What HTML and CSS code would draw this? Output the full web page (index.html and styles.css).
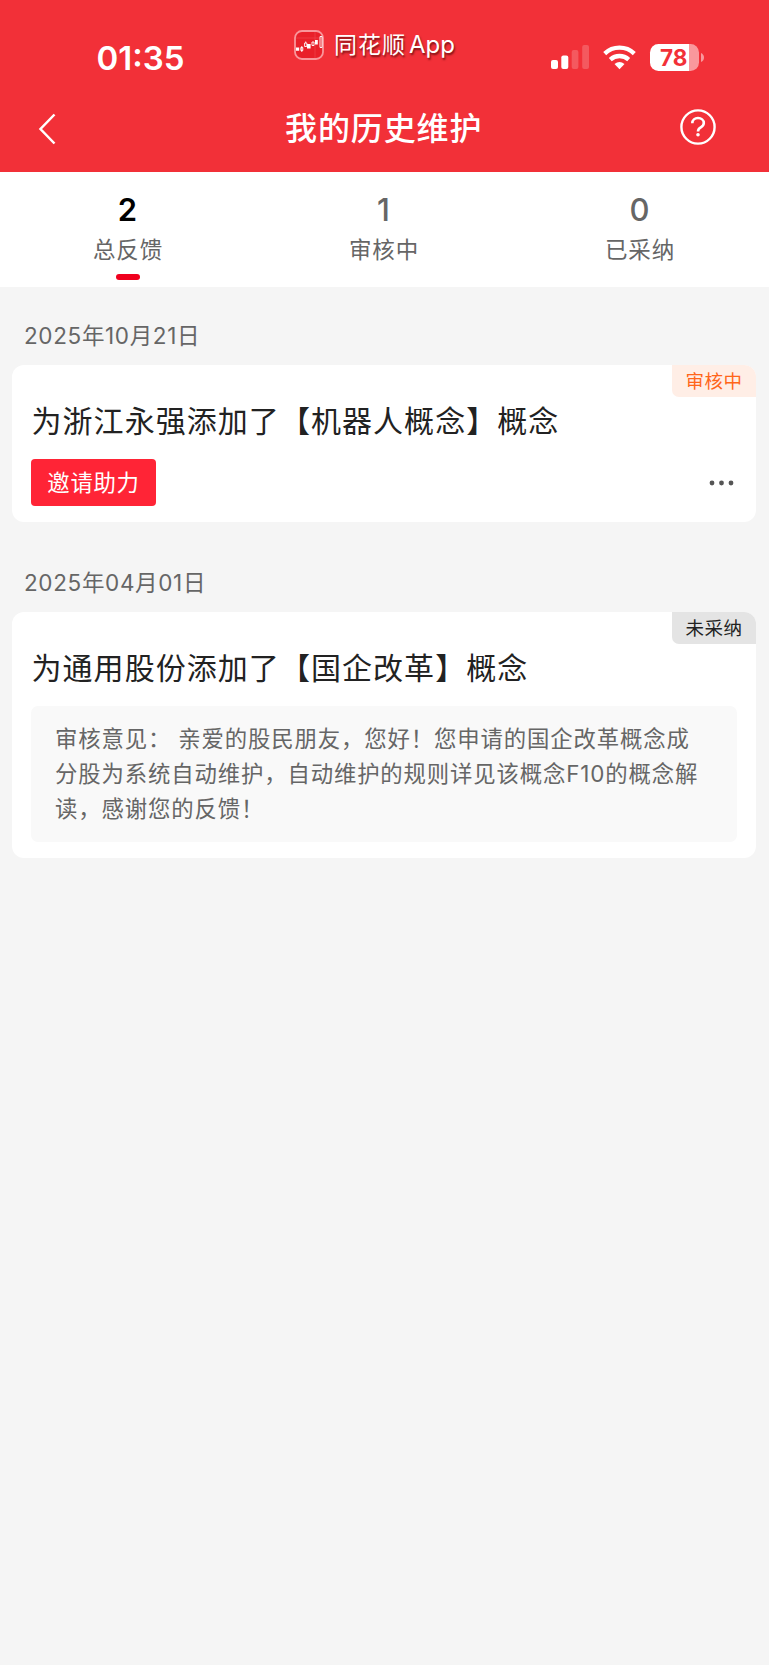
FILE: index.html
```html
<!DOCTYPE html>
<html lang="zh-CN">
<head>
<meta charset="utf-8">
<title>我的历史维护</title>
<link rel="stylesheet" href="styles.css">
</head>
<body>
<header class="header">
  <div class="status">
    <span class="clock">01:35</span>
    <div class="brand">
      <svg class="brand-icon" width="30" height="30" viewBox="0 0 30 30">
        <rect x="1" y="1" width="28" height="28" rx="7" fill="#e9202a" stroke="#f9969b" stroke-width="1.8"/>
        <path d="M2 8h26M21 2v26" stroke="#f04a50" stroke-width=".6"/>
        <path d="M2 17.500h3.200v3.200H2zM13 14h3.600v4.400H13zM21 10h2.800v4.500H21z" fill="#fff"/>
        <path d="M6.800 17.500h2v3h-2zM7.800 16v6M10.600 13h2.200v3.500h-2.200zM11.700 11.500V13M18 12h2v3.500h-2zM26 6.500h2v11h-2z" fill="none" stroke="#fff" stroke-width=".9"/>
      </svg>
      <span class="brand-name">同花顺</span><span class="brand-app">App</span>
    </div>
    <div class="indicators">
      <svg width="38" height="25" viewBox="0 0 38 25" fill="#fff">
        <rect x="0" y="15" width="7" height="9" rx="2"/>
        <rect x="10.300" y="10.500" width="7" height="13.500" rx="2"/>
        <rect x="20.700" y="5" width="6.700" height="19" rx="2" opacity=".2"/>
        <rect x="31.200" y="0" width="6.800" height="24" rx="2" opacity=".2"/>
      </svg>
      <svg class="wifi" width="33" height="25" viewBox="0 0 33 25" fill="none" stroke="#fff" stroke-width="4.300">
        <path d="M1.700 8.600a21.500 21.500 0 0 1 29.600 0"/>
        <path d="M7.300 14.600a13.500 13.500 0 0 1 18.400 0"/>
        <path d="M11.500 19q5-4 10 0L16.500 24.200z" fill="#fff" stroke="none"/>
      </svg>
      <div class="battery"><span class="battery-text">78</span></div>
      <svg class="battery-tip" width="3" height="9" viewBox="0 0 3 9"><path d="M0 0q3 1.500 3 4.500T0 9z" fill="#f9989c"/></svg>
    </div>
  </div>
  <nav class="nav">
    <svg class="back" width="18" height="32" viewBox="0 0 18 32"><path d="M16.500 1.500 2.500 16l14 14.500" fill="none" stroke="#fff" stroke-width="2.500"/></svg>
    <h1 class="nav-title">我的历史维护</h1>
    <svg class="help" width="36" height="36" viewBox="0 0 36 36" fill="none" stroke="#fff" stroke-width="2.400">
      <circle cx="18" cy="18" r="16.600"/>
      <path d="M12.300 14.200c0-3.300 2.500-5.200 5.700-5.200s5.800 2 5.800 5c0 2.300-1.300 3.400-3 4.400-1.900 1.100-2.800 1.900-2.800 4.100" stroke-width="2.600"/>
      <circle cx="18" cy="25.800" r="1.800" fill="#fff" stroke="none"/>
    </svg>
  </nav>
</header>

<section class="tabs">
  <div class="tab active"><span class="count">2</span><span class="label">总反馈</span><i class="bar"></i></div>
  <div class="tab"><span class="count">1</span><span class="label">审核中</span></div>
  <div class="tab"><span class="count">0</span><span class="label">已采纳</span></div>
</section>

<main class="list">
  <div class="date">2025年10月21日</div>
  <article class="card first">
    <span class="badge pending">审核中</span>
    <h2 class="title">为浙江永强添加了【机器人概念】概念</h2>
    <div class="actions">
      <button class="invite">邀请助力</button>
      <svg class="more" width="26" height="6" viewBox="0 0 26 6" fill="#555"><circle cx="3" cy="3" r="2.400"/><circle cx="12.500" cy="3" r="2.400"/><circle cx="22" cy="3" r="2.400"/></svg>
    </div>
  </article>
  <div class="date second">2025年04月01日</div>
  <article class="card">
    <span class="badge rejected">未采纳</span>
    <h2 class="title">为通用股份添加了【国企改革】概念</h2>
    <p class="note">审核意见： 亲爱的股民朋友，您好！您申请的国企改革概念成<br>分股为系统自动维护，自动维护的规则详见该概念F10的概念解<br>读，感谢您的反馈！</p>
  </article>
</main>
</body>
</html>
```
FILE: styles.css
```css
* { box-sizing: border-box; }
body {
  margin: 0;
  min-height: 1665px;
  background: #f5f5f5;
  font-family: Inter, "Noto Sans CJK SC", sans-serif;
  color: #222;
}
svg { display: block; flex: none; }
h1, h2, p { margin: 0; font-weight: 400; }

.header { height: 172px; background: #f23038; color: #fff; }
.status { height: 86px; display: flex; align-items: flex-start; }
.clock {
  width: 197.500px;
  margin-left: 96.500px;
  padding-top: 38px;
  font-size: 33px;
  line-height: 40px;
  font-weight: 600;
}
.brand {
  width: 257px;
  padding-top: 29px;
  display: flex;
  align-items: center;
  line-height: 30px;
  text-shadow: 1px 2px 2px rgba(60, 0, 0, .65);
}
.brand-name { margin-left: 10px; font-size: 23px; letter-spacing: 1px; white-space: nowrap; }
.brand-app { margin-left: 3px; padding-top: 1px; font-size: 24px; }
.indicators { display: flex; align-items: flex-start; padding-top: 45px; }
.wifi { margin-left: 14px; }
.battery {
  width: 49px;
  height: 27px;
  margin: -1px 2px 0 14px;
  border-radius: 8.500px;
  background: linear-gradient(90deg, #fff 38.500px, #f9989c 38.500px);
}
.battery-text {
  display: block;
  padding-left: 10px;
  font-size: 22.500px;
  line-height: 28px;
  font-weight: 700;
  color: #f23038;
}
.battery-tip { margin-top: 8px; }
.nav {
  height: 86px;
  padding: 0 53px 0 38px;
  display: grid;
  grid-template-columns: 54px 1fr 36px;
  align-items: center;
}
.nav-title { padding-left: 193px; font-size: 32px; letter-spacing: .9px; font-weight: 500; line-height: 40px; white-space: nowrap; }
.help { margin-bottom: 4px; }

.tabs { width: 768px; height: 115px; box-shadow: 1px 0 #fff; background: #fff; display: grid; grid-template-columns: repeat(3, 1fr); }
.tab { display: flex; flex-direction: column; align-items: center; padding-top: 19px; color: #666; }
.count { margin-left: -1px; font-size: 31px; line-height: 37px; font-weight: 500; }
.active .count { color: #000; font-weight: 600; }
.label { margin-top: 6px; font-size: 22.500px; line-height: 32px; letter-spacing: .8px; }
.bar { width: 24px; height: 6px; margin-top: 8px; border-radius: 3px; background: #f0001e; }

.list { padding: 31px 12px 0; }
.date { padding-left: 12px; font-size: 22.500px; line-height: 36px; letter-spacing: .65px; color: #666; }
.date.second { margin-top: 43px; }
.card { position: relative; width: 744px; margin-top: 11px; padding: 34px 19px 16px; border-radius: 12px; background: #fff; }
.title { padding-left: .5px; font-size: 30px; line-height: 45px; letter-spacing: 1.050px; white-space: nowrap; }
.badge {
  position: absolute;
  top: 0;
  right: 0;
  width: 84px;
  height: 32px;
  font-size: 18.500px;
  line-height: 32px;
  letter-spacing: .5px;
  text-align: center;
  border-radius: 0 12px 0 7px;
}
.pending { background: #ffeee6; color: #ff661a; }
.rejected { background: #e4e4e4; color: #222; }
.actions { margin-top: 15px; display: flex; align-items: center; justify-content: space-between; }
.invite {
  width: 125px;
  height: 47px;
  padding: 0 0 4px;
  border: 0;
  border-radius: 4px;
  background: #ff2436;
  color: #fff;
  font-family: inherit;
  font-size: 22.400px;
  letter-spacing: .7px;
}
.more { margin-right: 2px; }
.note {
  margin-top: 15px;
  height: 136px;
  padding: 15px 0 0 24px;
  border-radius: 7px;
  background: #f9f9f9;
  color: #666;
  font-size: 22.400px;
  line-height: 35.200px;
  letter-spacing: .85px;
  white-space: nowrap;
}
```
